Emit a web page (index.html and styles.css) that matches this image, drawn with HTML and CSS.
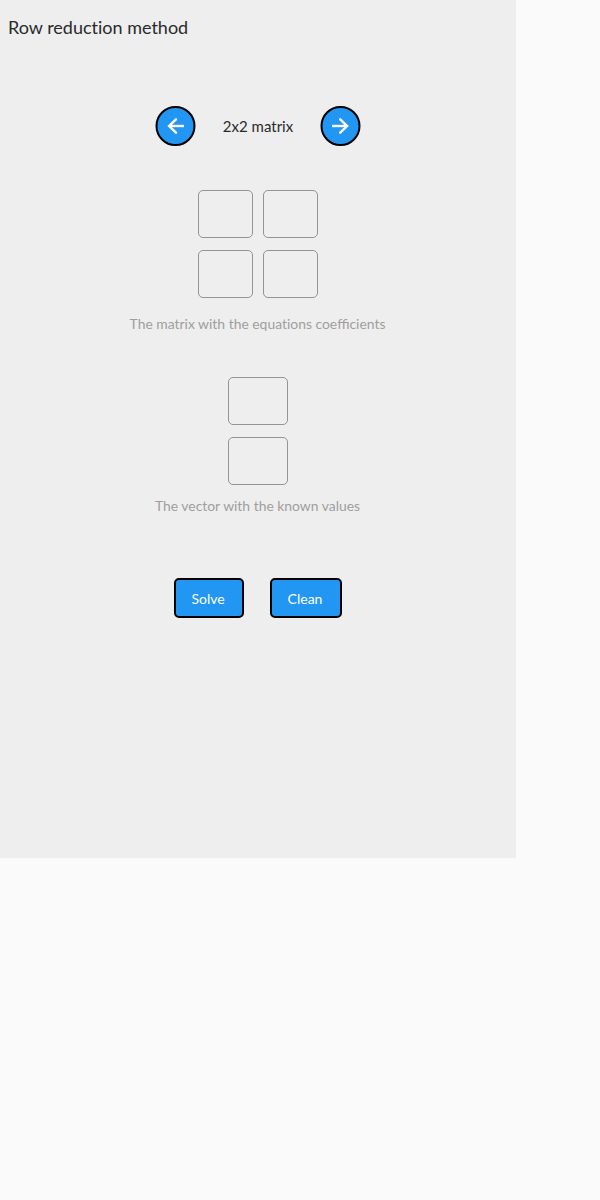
FILE: index.html
```html
<!DOCTYPE html>
<html lang="en">
<head>
<meta charset="utf-8">
<title>Row reduction method</title>
<link rel="stylesheet" href="styles.css">
</head>
<body>
<main class="page">
  <h1 class="title">Row reduction method</h1>
  <div class="switcher">
    <button class="round" aria-label="Previous"><svg viewBox="0 0 41 40"><circle class="disc" cx="20.5" cy="20" r="19"/><path class="shaft" d="M29 20H14"/><path d="M21 13.3L14.1 20l6.9 6.7"/></svg></button>
    <span class="size">2x2 matrix</span>
    <button class="round" aria-label="Next"><svg viewBox="0 0 41 40"><circle class="disc" cx="20.5" cy="20" r="19"/><path class="shaft" d="M12 20h15"/><path d="M20.2 13.3L27.1 20l-6.9 6.7"/></svg></button>
  </div>
  <div class="matrix">
    <input class="cell"><input class="cell"><input class="cell"><input class="cell">
  </div>
  <p class="caption">The matrix with the <span class="plain">equations</span> coefficients</p>
  <div class="vector">
    <input class="cell"><input class="cell">
  </div>
  <p class="caption caption-vector">The vector with the known values</p>
  <div class="actions">
    <button class="action solve">Solve</button>
    <button class="action clean">Clean</button>
  </div>
</main>
</body>
</html>
```
FILE: styles.css
```css
* { box-sizing: border-box; }
body { margin: 0; background: #fafafa; font-family: Lato, sans-serif; }
.page { width: 516px; height: 858px; background: #eee; display: flex; flex-direction: column; align-items: center; }
.title { align-self: flex-start; margin: 15px 0 0 8px; font-size: 18px; line-height: 24px; font-weight: 400; color: #2a2a2a; font-variant-ligatures: none; }
.switcher { display: flex; align-items: center; justify-content: space-between; width: 206px; height: 40px; margin-top: 67px; }
.round { width: 41px; height: 40px; padding: 0; border: 0; background: none; }
.round svg { display: block; width: 41px; height: 40px; fill: none; stroke: #fff; stroke-width: 2.4; stroke-linecap: round; stroke-linejoin: miter; }
.round .disc { fill: #2196f3; stroke: #000; stroke-width: 2; }
.round .shaft { stroke-linecap: butt; }
.size { font-size: 15px; line-height: 20px; color: #2a2a2a; }
.matrix { display: grid; grid-template-columns: 55px 55px; gap: 12px 10px; margin-top: 44px; }
.vector { display: grid; grid-template-columns: 60px; gap: 12px; margin-top: 43px; }
.cell { width: 100%; height: 48px; padding: 0 8px; border: 1px solid #949494; border-radius: 5px; background: transparent; text-align: center; font: inherit; }
.caption { margin: 16px 1px 0 0; font-size: 13.9px; line-height: 20px; color: #9e9e9e; }
.plain { font-variant-ligatures: none; }
.caption-vector { margin-top: 11px; }
.actions { display: flex; gap: 26px; margin-top: 62px; }
.action { height: 40px; padding: 0 2px 0 0; border: 2px solid #000; border-radius: 5px; background: #2196f3; color: #fff; font: 14px Lato, sans-serif; }
.solve { width: 70px; }
.clean { width: 72px; }
```
